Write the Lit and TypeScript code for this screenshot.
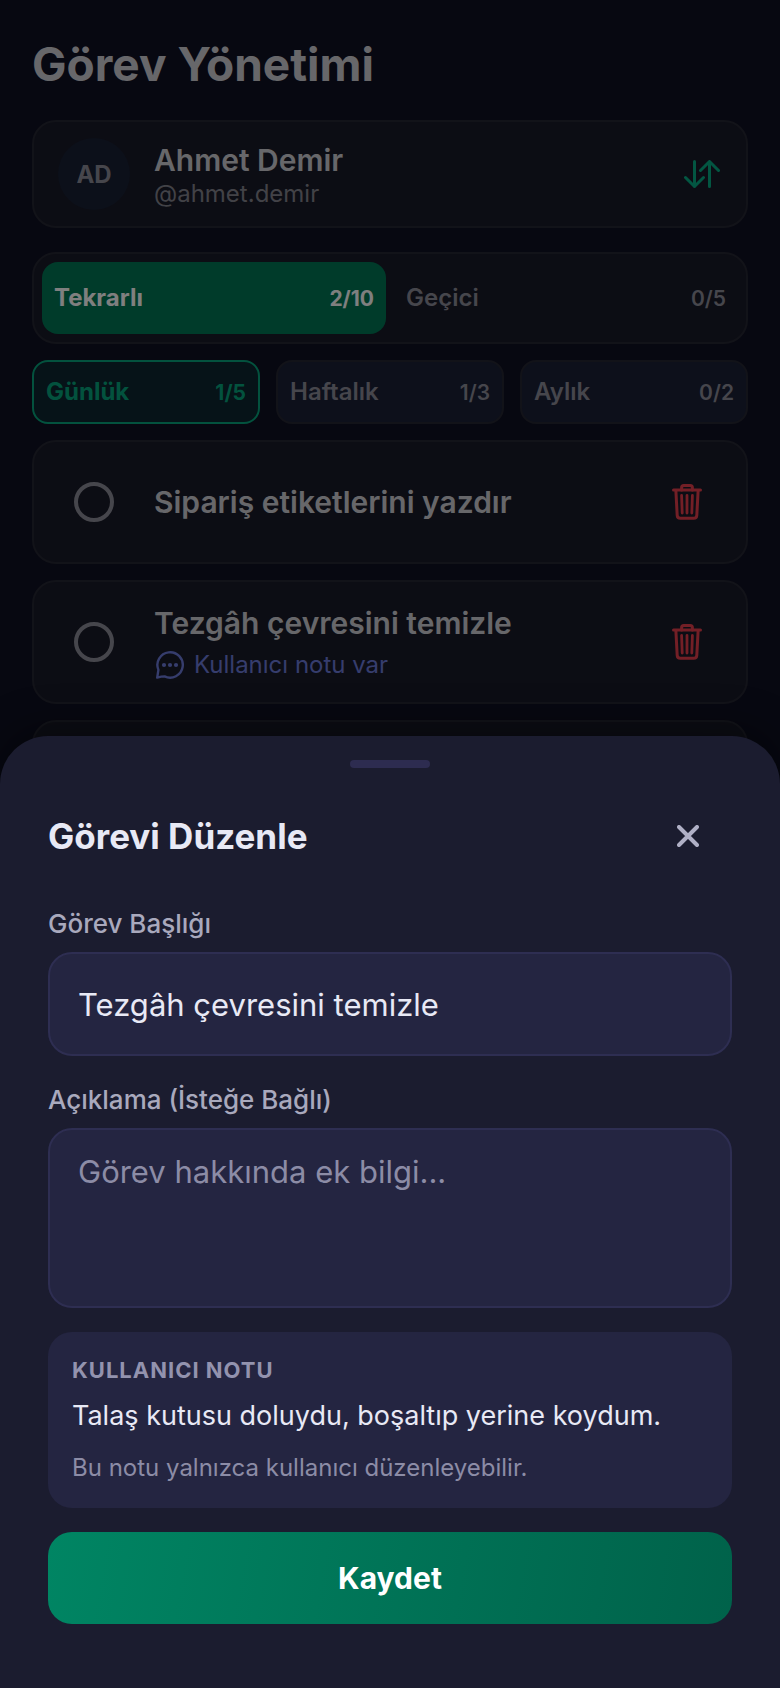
import { LitElement, html, css, svg, nothing } from "lit";
import { customElement, property, state } from "lit/decorators.js";
import { classMap } from "lit/directives/class-map.js";

const swapIcon = html`<svg class="swap" viewBox="0 0 36 28" aria-hidden="true">
  ${svg`<path d="M10.5 1.5V26.5M1.5 17.5L10.5 26.5L19.5 17.5M25.5 26.5V1.5M16.5 10.5L25.5 1.5L34.5 10.5" />`}
</svg>`;

const trashIcon = html`<svg class="trash" viewBox="0 0 30 36" aria-hidden="true">
  ${svg`<path d="M1.5 6H28.5" />
  <path d="M9.6 6V3.8Q9.6 1.6 11.8 1.6H18.2Q20.4 1.6 20.4 3.8V6" />
  <path d="M3.9 7L5.2 31.4Q5.4 34.3 8.3 34.3H21.7Q24.6 34.3 24.8 31.4L26.1 7" />
  <path class="thin" d="M9.6 11.5L10.2 29M15 11.5V29M20.4 11.5L19.8 29" />`}
</svg>`;

const chatIcon = html`<svg class="chat" viewBox="-2 0 30 28" aria-hidden="true">
  ${svg`<path d="M1.2 26.6L2.4 18.9A12.7 12.7 0 1 1 8.6 25.4Q5.6 25.4 1.2 26.6Z" />
  <circle cx="8" cy="14" r="2.1" /><circle cx="14" cy="14" r="2.1" /><circle cx="20" cy="14" r="2.1" />`}
</svg>`;

const closeIcon = html`<svg class="close-icon" viewBox="0 0 22 22" aria-hidden="true">
  ${svg`<path d="M2 2L20 20M20 2L2 20" />`}
</svg>`;

interface Tab {
  label: string;
  count: string;
}

@customElement("task-card")
export class TaskCard extends LitElement {
  @property() heading = "";
  @property({ type: Boolean }) noted = false;

  static styles = css`
    :host {
      display: flex;
      align-items: center;
      min-height: 124px;
      box-sizing: border-box;
      padding: 0 40px;
      border: 2px solid #252632;
      border-radius: 24px;
      background: #191a28;
    }
    .check {
      appearance: none;
      flex: none;
      width: 40px;
      height: 40px;
      margin: 0 40px 0 0;
      border: 4px solid #8c8c98;
      border-radius: 50%;
    }
    .body {
      flex: 1;
      min-width: 0;
      display: flex;
      flex-direction: column;
      gap: 6px;
    }
    .title {
      margin: 0;
      font-size: 30px;
      line-height: 40px;
      font-weight: 600;
      color: #cfcfd4;
    }
    .note {
      display: flex;
      align-items: center;
      gap: 10px;
      font-size: 24px;
      line-height: 32px;
      color: #6c7ada;
    }
    svg {
      fill: none;
      stroke: currentColor;
      stroke-linecap: round;
      stroke-linejoin: round;
      display: block;
    }
    .chat {
      width: 30px;
      height: 28px;
      stroke-width: 2.4;
    }
    .chat circle {
      fill: currentColor;
      stroke: none;
    }
    .delete {
      flex: none;
      padding: 4px;
      border: 0;
      background: none;
      color: #e63e4c;
    }
    .trash {
      width: 30px;
      height: 36px;
      stroke-width: 3;
    }
    .thin {
      stroke-width: 2.8;
    }
  `;

  render() {
    if (!this.heading) return nothing;
    return html`
      <input class="check" type="checkbox" aria-label=${this.heading} />
      <div class="body">
        <h2 class="title">${this.heading}</h2>
        ${this.noted
          ? html`<div class="note">${chatIcon}<span>Kullanıcı notu var</span></div>`
          : nothing}
      </div>
      <button class="delete" type="button" aria-label="Sil">${trashIcon}</button>
    `;
  }
}

@customElement("app-root")
export class AppRoot extends LitElement {
  @state() private kind = 0;
  @state() private period = 0;

  private kinds: Tab[] = [
    { label: "Tekrarlı", count: "2/10" },
    { label: "Geçici", count: "0/5" },
  ];

  private periods: Tab[] = [
    { label: "Günlük", count: "1/5" },
    { label: "Haftalık", count: "1/3" },
    { label: "Aylık", count: "0/2" },
  ];

  static styles = css`
    :host {
      display: block;
      position: relative;
      box-sizing: border-box;
      min-height: 100vh;
      overflow: hidden;
      background: #0f1022;
      font-family: Inter, "Noto Sans", sans-serif;
    }
    button,
    input,
    textarea {
      font-family: inherit;
    }
    svg {
      display: block;
      fill: none;
      stroke: currentColor;
      stroke-linecap: round;
      stroke-linejoin: round;
    }
    .page {
      display: flex;
      flex-direction: column;
      gap: 16px;
      padding: 36px 32px 0;
    }
    .page-title {
      margin: 0 0 12px;
      font-size: 46px;
      line-height: 56px;
      font-weight: 700;
      color: #cfcfd4;
    }
    .user {
      display: flex;
      align-items: center;
      margin-bottom: 8px;
      padding: 16px 24px;
      border: 2px solid #252632;
      border-radius: 24px;
      background: #191a28;
    }
    .avatar {
      flex: none;
      display: grid;
      place-items: center;
      width: 72px;
      height: 72px;
      margin-right: 24px;
      border-radius: 50%;
      background: #182034;
      font-size: 24px;
      font-weight: 700;
      color: #8c8c98;
    }
    .who {
      flex: 1;
      min-width: 0;
    }
    .name {
      font-size: 30px;
      line-height: 40px;
      font-weight: 600;
      color: #cfcfd4;
    }
    .handle {
      font-size: 24px;
      line-height: 28px;
      color: #85858f;
    }
    .switch {
      padding: 0 2px;
      border: 0;
      background: none;
      color: #06ac84;
    }
    .swap {
      width: 36px;
      height: 28px;
      stroke-width: 3;
    }
    .segments {
      display: grid;
      grid-template-columns: 1fr 1fr;
      gap: 8px;
      padding: 8px;
      border: 2px solid #252632;
      border-radius: 24px;
      background: #191a28;
    }
    .chips {
      display: grid;
      grid-template-columns: repeat(3, 1fr);
      gap: 16px;
    }
    .tab {
      display: flex;
      align-items: baseline;
      justify-content: space-between;
      box-sizing: border-box;
      border: 0;
      padding: 20px 12px;
      border-radius: 16px;
      background: none;
      font-size: 24px;
      line-height: 32px;
      font-weight: 600;
      color: #8c8c98;
    }
    .tab.on {
      background: #007654;
      color: #ffffff;
      font-weight: 700;
    }
    .chip {
      padding: 14px 12px;
      border: 2px solid #252632;
      background: #1b2036;
    }
    .tab.chip.on {
      border-color: #06a47c;
      background: #0c2630;
      color: #06a47c;
    }
    .count {
      font-size: 21px;
      line-height: 24px;
    }
    .list {
      display: flex;
      flex-direction: column;
      gap: 16px;
    }
    .backdrop {
      position: absolute;
      inset: 0;
      background: rgba(0, 0, 0, 0.5);
    }
    .sheet {
      position: absolute;
      left: 0;
      right: 0;
      bottom: 0;
      display: flex;
      flex-direction: column;
      padding: 24px 48px 64px;
      border-radius: 48px 48px 0 0;
      background: #1b1c2f;
      box-shadow: 0 -8px 40px rgba(0, 0, 0, 0.4);
    }
    .grip {
      align-self: center;
      width: 80px;
      height: 8px;
      border-radius: 4px;
      background: #2d2c50;
    }
    .sheet-head {
      display: flex;
      align-items: center;
      justify-content: space-between;
      margin: 24px 0 28px;
    }
    .sheet-title {
      margin: 0;
      font-size: 35px;
      line-height: 44px;
      font-weight: 700;
      color: #e8e9f5;
    }
    .close {
      display: grid;
      place-items: center;
      width: 88px;
      height: 88px;
      padding: 0;
      border: 0;
      background: none;
      color: #b0b0c6;
    }
    .close-icon {
      width: 22px;
      height: 22px;
      stroke-width: 4;
    }
    .label {
      margin-bottom: 12px;
      font-size: 26px;
      line-height: 32px;
      font-weight: 500;
      color: #a9a9bd;
    }
    .field {
      display: block;
      box-sizing: border-box;
      width: 100%;
      margin: 0 0 28px;
      padding: 30px 28px;
      border: 2px solid #2e2e52;
      border-radius: 24px;
      outline: 0;
      background: #242541;
      font-size: 31px;
      line-height: 40px;
      color: #e8e9f5;
    }
    input.field {
      height: 104px;
    }
    textarea.field {
      height: 180px;
      margin-bottom: 24px;
      padding-top: 22px;
      resize: none;
    }
    .field::placeholder {
      color: #8c8ca6;
      opacity: 1;
    }
    .note {
      display: flex;
      flex-direction: column;
      margin-bottom: 24px;
      padding: 24px;
      border-radius: 24px;
      background: #242541;
    }
    .note-label {
      margin: 0 0 12px;
      font-size: 22px;
      line-height: 28px;
      font-weight: 700;
      letter-spacing: 1px;
      color: #9393ae;
    }
    .note-text {
      margin: 0 0 16px;
      font-size: 27px;
      line-height: 40px;
      color: #e8e9f5;
    }
    .note-hint {
      margin: 0;
      font-size: 24px;
      line-height: 32px;
      color: #8c8ca6;
    }
    .save {
      padding: 26px;
      border: 0;
      border-radius: 24px;
      background: linear-gradient(100deg, #008563, #00624a);
      font-size: 30px;
      line-height: 40px;
      font-weight: 700;
      color: #ffffff;
    }
  `;

  private tab(item: Tab, on: boolean, chip: boolean, pick: () => void) {
    return html`<button
      type="button"
      class=${classMap({ tab: true, chip, on })}
      aria-pressed=${on}
      @click=${pick}
    >
      <span>${item.label}</span><span class="count">${item.count}</span>
    </button>`;
  }

  render() {
    return html`
      <main class="page">
        <h1 class="page-title">Görev Yönetimi</h1>
        <section class="user">
          <div class="avatar">AD</div>
          <div class="who">
            <div class="name">Ahmet Demir</div>
            <div class="handle">@ahmet.demir</div>
          </div>
          <button class="switch" type="button" aria-label="Kullanıcı değiştir">${swapIcon}</button>
        </section>
        <div class="segments">
          ${this.kinds.map((k, i) => this.tab(k, i === this.kind, false, () => (this.kind = i)))}
        </div>
        <div class="chips">
          ${this.periods.map((p, i) => this.tab(p, i === this.period, true, () => (this.period = i)))}
        </div>
        <div class="list">
          <task-card heading="Sipariş etiketlerini yazdır"></task-card>
          <task-card heading="Tezgâh çevresini temizle" noted></task-card>
          <task-card></task-card>
        </div>
      </main>
      <div class="backdrop"></div>
      <form class="sheet" role="dialog" aria-labelledby="sheet-title">
        <div class="grip"></div>
        <header class="sheet-head">
          <h2 class="sheet-title" id="sheet-title">Görevi Düzenle</h2>
          <button class="close" type="button" aria-label="Kapat">${closeIcon}</button>
        </header>
        <label class="label" for="title">Görev Başlığı</label>
        <input class="field" id="title" type="text" value="Tezgâh çevresini temizle" />
        <label class="label" for="details">Açıklama (İsteğe Bağlı)</label>
        <textarea class="field" id="details" placeholder="Görev hakkında ek bilgi..."></textarea>
        <section class="note">
          <h3 class="note-label">KULLANICI NOTU</h3>
          <p class="note-text">Talaş kutusu doluydu, boşaltıp yerine koydum.</p>
          <p class="note-hint">Bu notu yalnızca kullanıcı düzenleyebilir.</p>
        </section>
        <button class="save" type="button">Kaydet</button>
      </form>
    `;
  }
}
